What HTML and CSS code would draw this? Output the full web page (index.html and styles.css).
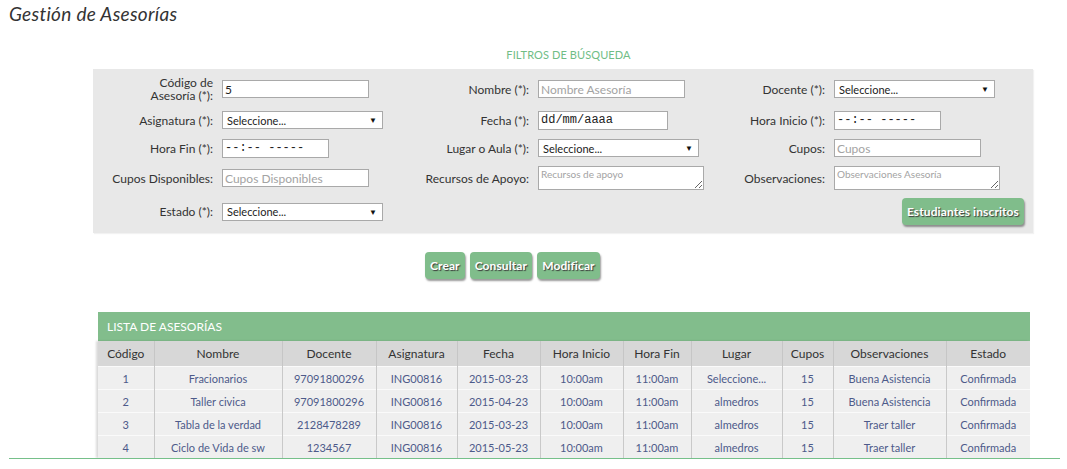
FILE: index.html
```html
<!DOCTYPE html>
<html lang="es">
<head>
<meta charset="utf-8">
<title>Gestión de Asesorías</title>
<link rel="stylesheet" href="styles.css">
</head>
<body>
<h1 class="page-title">Gestión de Asesorías</h1>
<div class="filters-title">FILTROS DE BÚSQUEDA</div>
<form class="panel">
  <label class="lbl">Código de<br>Asesoría (*):</label>
  <div class="fld"><input class="inp w147" type="text" value="5"></div>
  <label class="lbl">Nombre (*):</label>
  <div class="fld"><input class="inp w147" type="text" placeholder="Nombre Asesoría"></div>
  <label class="lbl">Docente (*):</label>
  <div class="fld"><div class="sel w161"><span>Seleccione...</span><span class="arrow">▼</span></div></div>

  <label class="lbl">Asignatura (*):</label>
  <div class="fld"><div class="sel w161"><span>Seleccione...</span><span class="arrow">▼</span></div></div>
  <label class="lbl">Fecha (*):</label>
  <div class="fld"><input class="inp mono w130 tall" type="text" value="dd/mm/aaaa"></div>
  <label class="lbl">Hora Inicio (*):</label>
  <div class="fld"><input class="inp mono w107 tall" type="text" value="--:-- -----"></div>

  <label class="lbl">Hora Fin (*):</label>
  <div class="fld"><input class="inp mono w107 tall" type="text" value="--:-- -----"></div>
  <label class="lbl">Lugar o Aula (*):</label>
  <div class="fld"><div class="sel w161"><span>Seleccione...</span><span class="arrow">▼</span></div></div>
  <label class="lbl">Cupos:</label>
  <div class="fld"><input class="inp w147" type="text" placeholder="Cupos"></div>

  <label class="lbl">Cupos Disponibles:</label>
  <div class="fld"><input class="inp w147" type="text" placeholder="Cupos Disponibles"></div>
  <label class="lbl">Recursos de Apoyo:</label>
  <div class="fld"><textarea class="ta" placeholder="Recursos de apoyo"></textarea></div>
  <label class="lbl">Observaciones:</label>
  <div class="fld"><textarea class="ta" placeholder="Observaciones Asesoría"></textarea></div>

  <label class="lbl">Estado (*):</label>
  <div class="fld"><div class="sel w161"><span>Seleccione...</span><span class="arrow">▼</span></div></div>
  <div class="fld btn-cell"><button type="button" class="btn">Estudiantes inscritos</button></div>
</form>

<div class="actions">
  <button type="button" class="btn">Crear</button>
  <button type="button" class="btn">Consultar</button>
  <button type="button" class="btn">Modificar</button>
</div>

<section class="list">
  <div class="list-head">LISTA DE ASESORÍAS</div>
  <table class="grid">
    <colgroup>
      <col style="width:56px"><col style="width:128px"><col style="width:94px"><col style="width:81px"><col style="width:83px"><col style="width:83px"><col style="width:68px"><col style="width:91px"><col style="width:51px"><col style="width:113px"><col style="width:84px">
    </colgroup>
    <thead>
      <tr><th>Código</th><th>Nombre</th><th>Docente</th><th>Asignatura</th><th>Fecha</th><th>Hora Inicio</th><th>Hora Fin</th><th>Lugar</th><th>Cupos</th><th>Observaciones</th><th>Estado</th></tr>
    </thead>
    <tbody>
      <tr><td>1</td><td>Fracionarios</td><td>97091800296</td><td>ING00816</td><td>2015-03-23</td><td>10:00am</td><td>11:00am</td><td>Seleccione...</td><td>15</td><td>Buena Asistencia</td><td>Confirmada</td></tr>
      <tr><td>2</td><td>Taller civica</td><td>97091800296</td><td>ING00816</td><td>2015-04-23</td><td>10:00am</td><td>11:00am</td><td>almedros</td><td>15</td><td>Buena Asistencia</td><td>Confirmada</td></tr>
      <tr><td>3</td><td>Tabla de la verdad</td><td>2128478289</td><td>ING00816</td><td>2015-03-23</td><td>10:00am</td><td>11:00am</td><td>almedros</td><td>15</td><td>Traer taller</td><td>Confirmada</td></tr>
      <tr><td>4</td><td>Ciclo de Vida de sw</td><td>1234567</td><td>ING00816</td><td>2015-05-23</td><td>10:00am</td><td>11:00am</td><td>almedros</td><td>15</td><td>Traer taller</td><td>Confirmada</td></tr>
    </tbody>
  </table>
</section>
<div class="footer-line"></div>
</body>
</html>
```

FILE: styles.css
```css
html, body {
  margin: 0;
  padding: 0;
  background: #fff;
}
body {
  font-family: "Lato", "Liberation Sans", sans-serif;
  font-size: 12px;
  color: #333;
}
.page-title {
  margin: 0;
  padding: 3px 9px 0;
  font-size: 19px;
  line-height: 22px;
  font-style: italic;
  font-weight: normal;
  color: #333;
  letter-spacing: 0.3px;
}
.filters-title {
  margin: 23px 0 0 0;
  padding-left: 70px;
  text-align: center;
  font-size: 11px;
  line-height: 13px;
  color: #70bd86;
  letter-spacing: 0.1px;
}
.panel {
  margin: 8px 0 0 93px;
  width: 931px;
  padding: 7px 9px 8px 0;
  background: #e8e8e8;
  box-shadow: 1px 1px 1px #f2f2f2;
  display: grid;
  grid-template-columns: 120px 178px 120px 178px 100px 190px;
  grid-template-rows: 26px 20px 20px 24px 27px;
  column-gap: 9px;
  row-gap: 8px;
}
.lbl {
  align-self: center;
  text-align: right;
  line-height: 13px;
  color: #333;
}
.fld {
  display: flex;
  align-items: center;
}
.inp {
  box-sizing: border-box;
  height: 18px;
  border: 1px solid #a9a9a9;
  background: #fff;
  padding: 0 2px;
  font-family: "Lato", "Liberation Sans", sans-serif;
  font-size: 12px;
  color: #222;
  outline: none;
}
.inp.tall { height: 19px; }
.inp::placeholder { color: #a3a3a3; }
.mono {
  font-family: "Liberation Mono", "DejaVu Sans Mono", monospace;
  font-size: 12px;
  color: #222;
}
.w147 { width: 147px; }
.w130 { width: 130px; }
.w107 { width: 107px; }
.w161 { width: 161px; }
.sel {
  box-sizing: border-box;
  height: 18px;
  border: 1px solid #a9a9a9;
  background: #fff;
  display: flex;
  align-items: center;
  justify-content: space-between;
  padding: 0 5px 0 4px;
  font-size: 11px;
  color: #222;
}
.arrow {
  font-size: 8px;
  color: #111;
}
.ta {
  box-sizing: border-box;
  flex: none;
  width: 166px;
  height: 24px;
  border: 1px solid #a9a9a9;
  background: #fff;
  padding: 1px 2px;
  font-family: "Lato", "Liberation Sans", sans-serif;
  font-size: 10px;
  resize: both;
  outline: none;
}
.ta::placeholder { color: #a3a3a3; }
.btn-cell {
  grid-column: 6;
  justify-content: flex-end;
  align-items: flex-start;
}
.btn {
  box-sizing: border-box;
  height: 27px;
  padding: 0 5px;
  border: 0;
  border-radius: 4px;
  background: #80bd8b;
  color: #fff;
  font-family: "Lato", "Liberation Sans", sans-serif;
  font-size: 12px;
  font-weight: bold;
  letter-spacing: 0.1px;
  text-shadow: 1px 1px 1px #3a3a3a;
  box-shadow: 1px 2px 2px rgba(0, 0, 0, 0.4);
  cursor: pointer;
}
.actions {
  display: flex;
  gap: 5px;
  margin: 19px 0 0 425px;
}
.list {
  margin: 33px 0 0 98px;
  width: 932px;
}
.list-head {
  height: 29px;
  line-height: 29px;
  padding-left: 9px;
  background: #82bd8c;
  color: #fff;
  font-size: 12px;
}
.grid {
  width: 932px;
  table-layout: fixed;
  border-collapse: collapse;
  box-shadow: -2px 0 2px rgba(0, 0, 0, 0.15);
}
.grid th {
  height: 25px;
  padding: 0;
  background: #d7d7d7;
  font-weight: normal;
  font-size: 12px;
  color: #333;
  border-left: 1px solid #c6c6c6;
}
.grid td {
  height: 22px;
  padding: 0;
  text-align: center;
  background: #efefef;
  font-size: 11px;
  color: #4d5a8a;
  border-left: 1px solid #c9c9c9;
  border-top: 1px solid #fafafa;
}
.grid th:first-child,
.grid td:first-child { border-left: 0; }
.footer-line {
  margin: 0 7px 0 9px;
  border-top: 1px solid #76c08a;
}
```
